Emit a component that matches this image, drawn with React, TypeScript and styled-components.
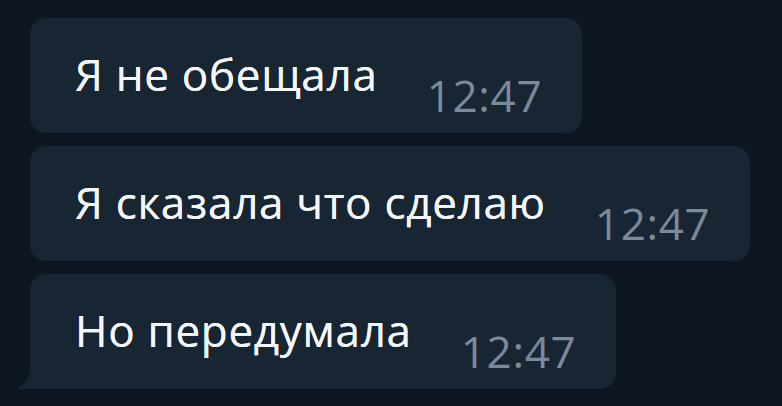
import styled, { createGlobalStyle } from "styled-components";

const GlobalStyle = createGlobalStyle`
  html, body {
    margin: 0;
    padding: 0;
    background: #0e1621;
  }
  body {
    font-family: "Open Sans", "Noto Sans", sans-serif;
  }
`;

const Chat = styled.div`
  display: flex;
  flex-direction: column;
  align-items: flex-start;
  gap: 13px;
  width: 782px;
  height: 406px;
  padding: 18px 0 0 30px;
  box-sizing: border-box;
  background: #0e1621;
  overflow: hidden;
`;

const Bubble = styled.div<{ $tail?: boolean }>`
  position: relative;
  display: flex;
  align-items: flex-end;
  padding: 28px 40px 9px 45px;
  background: #182533;
  border-radius: 16px;
  border-bottom-left-radius: ${(props) => (props.$tail ? "0" : "16px")};

  &::before,
  &::after {
    content: "";
    display: ${(props) => (props.$tail ? "block" : "none")};
    position: absolute;
    bottom: 0;
  }
  &::before {
    left: -12px;
    width: 14px;
    height: 22px;
    background: #182533;
  }
  &::after {
    left: -24px;
    width: 24px;
    height: 24px;
    background: #0e1621;
    border-bottom-right-radius: 20px;
  }
`;

const Text = styled.span`
  font-size: 44px;
  line-height: 57px;
  letter-spacing: 0.7px;
  color: #f4f6f8;
  margin-bottom: 21px;
  white-space: nowrap;
  text-shadow: 0 0 0.6px #f4f6f8;
`;

const Time = styled.span`
  font-size: 44px;
  line-height: 57px;
  letter-spacing: 0.7px;
  color: #7b8a99;
  margin-left: 49px;
`;

const messages = [
  { id: 1, text: "Я не обещала", time: "12:47" },
  { id: 2, text: "Я сказала что сделаю", time: "12:47" },
  { id: 3, text: "Но передумала", time: "12:47" },
];

function App() {
  return (
    <>
      <GlobalStyle />
      <Chat>
        {messages.map((msg, i) => (
          <Bubble key={msg.id} $tail={i === messages.length - 1}>
            <Text>{msg.text}</Text>
            <Time>{msg.time}</Time>
          </Bubble>
        ))}
      </Chat>
    </>
  );
}

export default App;
